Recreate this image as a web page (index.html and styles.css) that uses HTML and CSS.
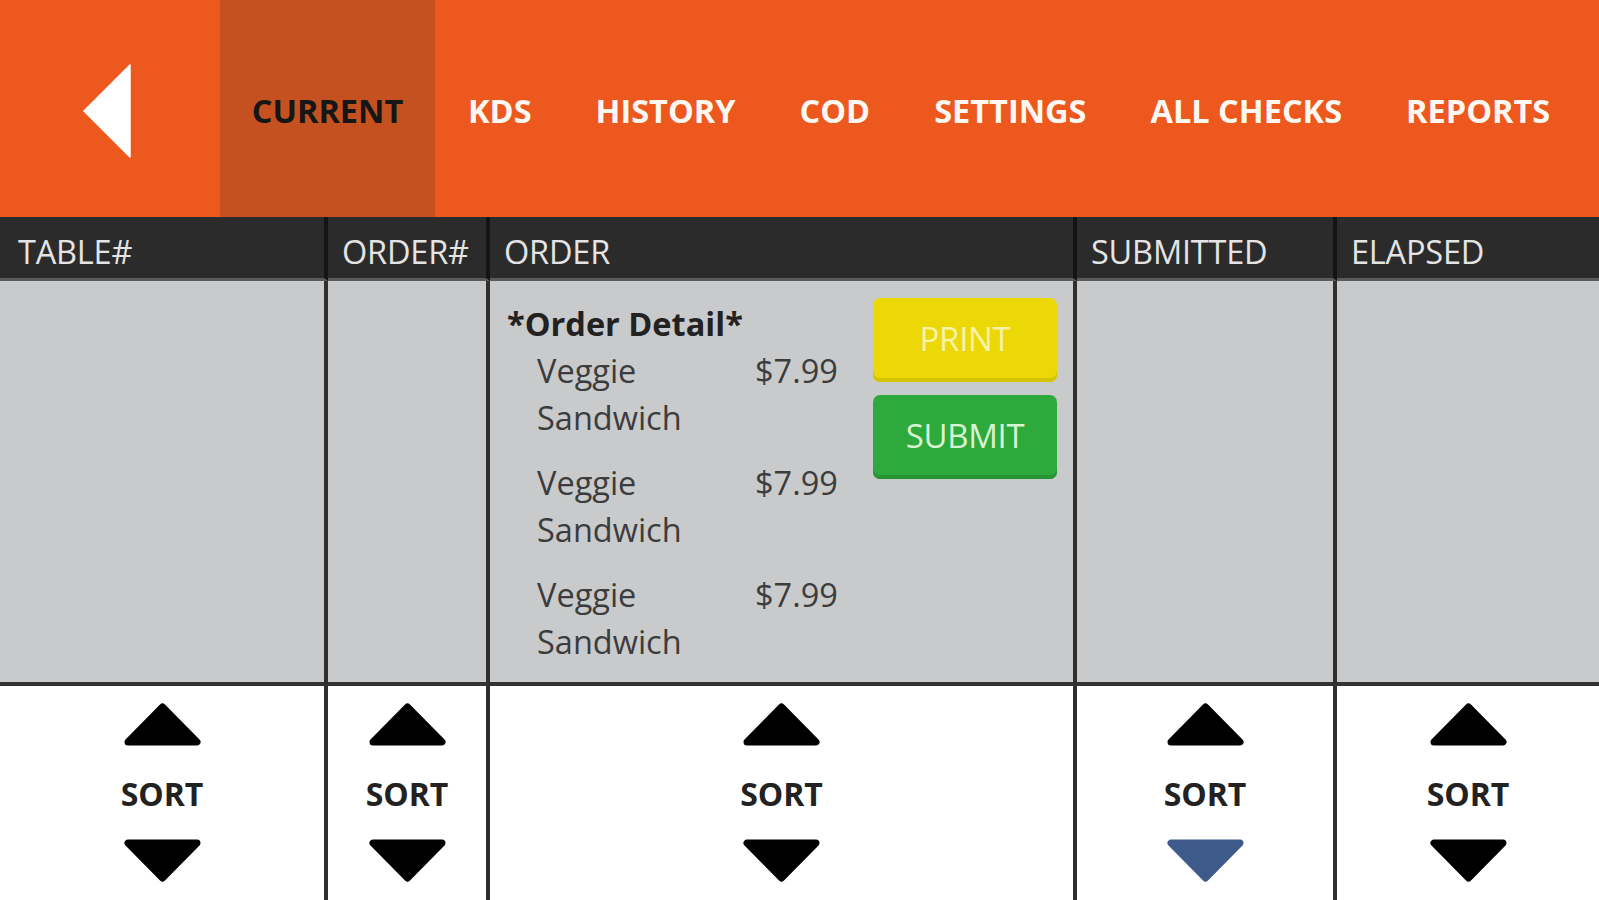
FILE: index.html
```html
<!DOCTYPE html>
<html lang="en">
<head>
<meta charset="utf-8">
<title>Current Orders</title>
<link rel="stylesheet" href="styles.css">
</head>
<body>
<div class="app">
  <nav class="topbar">
    <button class="back" aria-label="Back">
      <svg width="48" height="94" viewBox="0 0 48 94"><polygon points="47,1 47,93 1,47" fill="#ffffff" stroke="#ffffff" stroke-width="1.5" stroke-linejoin="round"/></svg>
    </button>
    <a class="tab active">CURRENT</a>
    <a class="tab">KDS</a>
    <a class="tab">HISTORY</a>
    <a class="tab">COD</a>
    <a class="tab">SETTINGS</a>
    <a class="tab">ALL CHECKS</a>
    <a class="tab">REPORTS</a>
  </nav>

  <div class="grid">
    <div class="cell head first">TABLE#</div>
    <div class="cell head">ORDER#</div>
    <div class="cell head">ORDER</div>
    <div class="cell head">SUBMITTED</div>
    <div class="cell head last">ELAPSED</div>

    <div class="cell body"></div>
    <div class="cell body"></div>
    <div class="cell body order">
      <div class="detail">
        <div class="detail-title">*Order Detail*</div>
        <div class="item"><span class="name">Veggie Sandwich</span><span class="price">$7.99</span></div>
        <div class="item"><span class="name">Veggie Sandwich</span><span class="price">$7.99</span></div>
        <div class="item"><span class="name">Veggie Sandwich</span><span class="price">$7.99</span></div>
      </div>
      <div class="actions">
        <button class="btn print">PRINT</button>
        <button class="btn submit">SUBMIT</button>
      </div>
    </div>
    <div class="cell body"></div>
    <div class="cell body last"></div>

    <div class="cell sort">
      <svg class="tri" width="77" height="43" viewBox="0 0 77 43"><polygon points="4,39 38.5,4 73,39" fill="#000" stroke="#000" stroke-width="7" stroke-linejoin="round"/></svg>
      <span class="sort-label">SORT</span>
      <svg class="tri" width="77" height="43" viewBox="0 0 77 43"><polygon points="4,4 73,4 38.5,39" fill="#000" stroke="#000" stroke-width="7" stroke-linejoin="round"/></svg>
    </div>
    <div class="cell sort">
      <svg class="tri" width="77" height="43" viewBox="0 0 77 43"><polygon points="4,39 38.5,4 73,39" fill="#000" stroke="#000" stroke-width="7" stroke-linejoin="round"/></svg>
      <span class="sort-label">SORT</span>
      <svg class="tri" width="77" height="43" viewBox="0 0 77 43"><polygon points="4,4 73,4 38.5,39" fill="#000" stroke="#000" stroke-width="7" stroke-linejoin="round"/></svg>
    </div>
    <div class="cell sort">
      <svg class="tri" width="77" height="43" viewBox="0 0 77 43"><polygon points="4,39 38.5,4 73,39" fill="#000" stroke="#000" stroke-width="7" stroke-linejoin="round"/></svg>
      <span class="sort-label">SORT</span>
      <svg class="tri" width="77" height="43" viewBox="0 0 77 43"><polygon points="4,4 73,4 38.5,39" fill="#000" stroke="#000" stroke-width="7" stroke-linejoin="round"/></svg>
    </div>
    <div class="cell sort">
      <svg class="tri" width="77" height="43" viewBox="0 0 77 43"><polygon points="4,39 38.5,4 73,39" fill="#000" stroke="#000" stroke-width="7" stroke-linejoin="round"/></svg>
      <span class="sort-label">SORT</span>
      <svg class="tri" width="77" height="43" viewBox="0 0 77 43"><polygon points="4,4 73,4 38.5,39" fill="#3d5a8a" stroke="#3d5a8a" stroke-width="7" stroke-linejoin="round"/></svg>
    </div>
    <div class="cell sort last">
      <svg class="tri" width="77" height="43" viewBox="0 0 77 43"><polygon points="4,39 38.5,4 73,39" fill="#000" stroke="#000" stroke-width="7" stroke-linejoin="round"/></svg>
      <span class="sort-label">SORT</span>
      <svg class="tri" width="77" height="43" viewBox="0 0 77 43"><polygon points="4,4 73,4 38.5,39" fill="#000" stroke="#000" stroke-width="7" stroke-linejoin="round"/></svg>
    </div>
  </div>
</div>
</body>
</html>
```

FILE: styles.css
```css
* { box-sizing: border-box; }

html, body {
  margin: 0;
  padding: 0;
  width: 1599px;
  height: 900px;
  overflow: hidden;
  background: #ffffff;
  font-family: "Open Sans", "Liberation Sans", sans-serif;
}

.app {
  display: flex;
  flex-direction: column;
  height: 900px;
}

/* top navigation */
.topbar {
  display: flex;
  align-items: stretch;
  height: 217px;
  background: #ec581d;
  flex: none;
}

.back {
  width: 220px;
  border: 0;
  margin: 0;
  padding: 4px 0 0 0;
  background: transparent;
  display: flex;
  align-items: center;
  justify-content: center;
}

.back svg {
  display: block;
  margin-left: -6px;
}

.tab {
  display: flex;
  align-items: center;
  padding: 4px 32px 0 32px;
  font-size: 32.5px;
  font-weight: 700;
  color: #fff8f2;
  white-space: nowrap;
}

.tab.active {
  background: #c4511f;
  color: #161616;
  width: 215px;
  justify-content: center;
  padding-left: 0;
  padding-right: 0;
  margin-right: 1px;
}

/* table grid */
.grid {
  flex: 1;
  display: grid;
  grid-template-columns: 328px 162px 587px 260px 1fr;
  grid-template-rows: 64px 405px 1fr;
}

.cell {
  border-right: 4px solid #2f2f2f;
}

.cell.last {
  border-right: 0;
}

.head {
  background: #2b2b2b;
  border-right-color: #141414;
  border-bottom: 3px solid #5a5b5c;
  color: #e4e4e4;
  font-size: 32.5px;
  font-weight: 400;
  letter-spacing: -0.2px;
  display: flex;
  align-items: center;
  padding: 8px 0 0 14px;
}

.head.first {
  padding-left: 18px;
}

.body {
  background: #c9cacc;
  border-bottom: 4px solid #333333;
}

.order {
  display: flex;
  justify-content: space-between;
  padding: 17px 16px 0 17px;
}

.detail {
  display: flex;
  flex-direction: column;
  gap: 18px;
  color: #3c3c3c;
  font-size: 32.5px;
  line-height: 47px;
  padding-top: 2px;
}

.detail-title {
  font-weight: 700;
  color: #222222;
  margin-bottom: -18px;
}

.item {
  display: flex;
  padding-left: 30px;
}

.item .name {
  width: 218px;
}

.actions {
  display: flex;
  flex-direction: column;
  gap: 13px;
}

.btn {
  width: 184px;
  height: 84px;
  border: 0;
  border-radius: 7px;
  font-family: "Open Sans", "Liberation Sans", sans-serif;
  font-size: 33px;
  font-weight: 400;
  letter-spacing: -0.3px;
  padding: 0 0 3px 0;
}

.btn.print {
  background: #ebd806;
  color: #f7f2a6;
  box-shadow: inset 0 -4px 0 #d4c204;
}

.btn.submit {
  background: #2eaa3d;
  color: #d8f3d2;
  box-shadow: inset 0 -4px 0 #279535;
}

/* sort row */
.sort {
  background: #ffffff;
  display: flex;
  flex-direction: column;
  align-items: center;
  padding-top: 17px;
}

.tri {
  display: block;
}

.sort-label {
  font-size: 32px;
  font-weight: 700;
  line-height: 32px;
  color: #222222;
  margin: 32px 0 29px 0;
}
```
